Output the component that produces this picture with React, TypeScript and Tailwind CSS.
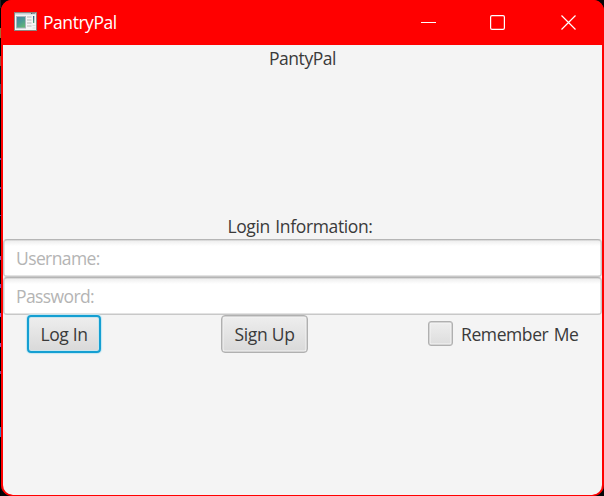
import React from "react";

const font = "font-['Open_Sans','Noto_Sans',sans-serif] font-normal [word-spacing:1.2px]";

function AppIcon() {
  return (
    <svg width="24" height="20" viewBox="0 0 24 20" className="mb-[2px] shrink-0">
      <defs>
        <linearGradient id="pane" x1="0" y1="0" x2="0.6" y2="1">
          <stop offset="0" stopColor="#4a7fa5" />
          <stop offset="0.55" stopColor="#4b9a93" />
          <stop offset="1" stopColor="#62b577" />
        </linearGradient>
        <linearGradient id="bar" x1="0" y1="0" x2="0" y2="1">
          <stop offset="0" stopColor="#34508e" />
          <stop offset="1" stopColor="#55a878" />
        </linearGradient>
      </defs>
      <rect x="0.5" y="0.5" width="22" height="18" fill="#f5f5f5" stroke="#8c8580" />
      <rect x="1" y="1" width="21" height="1.5" fill="#c3ccd2" />
      <path d="M17 1.5h1.5M19.5 1.5h1" stroke="#53606d" />
      <rect x="2.5" y="4.5" width="9" height="11.5" fill="url(#pane)" stroke="#a9b4bd" />
      <path d="M13 5h4.5M13 8h4.5M13 11h4.5M13 14h4.5" stroke="#cbcbcb" strokeWidth="1.5" />
      <rect x="19" y="4" width="1.3" height="7" fill="url(#bar)" />
      <path d="M18.5 13.5h3M18.5 16h3" stroke="#dddddd" />
    </svg>
  );
}

function TitleBar() {
  return (
    <header className="flex h-[45px] shrink-0 items-center bg-[#ff0000] pl-[13px] text-white">
      <AppIcon />
      <span className="mb-[2px] ml-[5px] grow text-[17.5px] leading-6 tracking-[-0.45px]">PantryPal</span>
      <div className="flex pr-[28px]">
        <svg width="15" height="15" viewBox="0 0 15 15"><path d="M0 7.5h15" stroke="#fff" /></svg>
        <svg className="ml-[54px]" width="15" height="15" viewBox="0 0 15 15" fill="none"><rect x=".6" y=".6" width="13.8" height="13.8" rx="1.4" stroke="#fff" strokeWidth="1.2" /></svg>
        <svg className="ml-[56px]" width="15" height="15" viewBox="0 0 15 15"><path d="M.5.5l14 14M14.5.5l-14 14" stroke="#fff" strokeWidth="1.2" /></svg>
      </div>
    </header>
  );
}

function Field({ label, type }: { label: string; type: string }) {
  return (
    <input
      type={type}
      placeholder={label}
      className="block h-[38px] w-full rounded-[4px] border border-[#c8c8c8] border-t-[#b5b5b5] bg-white bg-linear-to-b from-[#ececec] to-white to-[6px] px-3 text-[17.5px] tracking-[-0.6px] shadow-[inset_0_0_0_0.5px_#c8c8c8] outline-none placeholder:text-[#b4b4b4]"
    />
  );
}

export default function App() {
  return (
    <div className={`flex h-[496px] w-[604px] overflow-hidden bg-[#050507] text-[#3a3a3a] ${font}`}>
      <div className="w-px shrink-0 bg-[linear-gradient(#222_0_8px,#000_8px_28px,#a66a32_28px_38px,#000_38px_56px,#994b3b_56px_66px,#151515_66px_84px,#454d5e_84px_94px,#000_94px_158px,#4848a5_158px_160px,#000_160px_187px,#4c45a0_187px_189px,#000_189px_215px,#4343a0_215px_216px,#000_216px_256px,#8354aa_256px_260px,#000_260px_284px,#6656b1_284px_288px,#000_288px_313px,#7c65c5_313px_317px,#000_317px_343px,#875bb0_343px_347px,#000_347px_371px,#734e94_371px_374px,#000_374px_427px,#3680b7_427px_437px,#000_437px)]" />
      <div className="flex h-full w-[603px] flex-col overflow-hidden rounded-[11px] border-b border-[#ff0000] bg-[#ff0000]">
        <TitleBar />
        <main className="mr-[2px] ml-[2px] flex grow flex-col rounded-b-[10px] bg-[#f4f4f4]">
          <h1 className="h-[170px] pt-[1px] text-center text-[17.5px] leading-6 tracking-[-0.45px]">PantyPal</h1>
          <p className="h-6 pr-[5px] text-center text-[17.5px] leading-6 tracking-[-0.36px]"><span className="-mt-px block">Login Information:</span></p>
          <Field label="Username:" type="text" />
          <Field label="Password:" type="password" />
          <div className="flex items-center pl-[24px]">
            <button className="h-[38px] w-[74px] rounded-[4px] border-2 border-[#149fd2] bg-linear-to-b from-[#eeeeee] to-[#d9d9d9] text-[17.5px] tracking-[-0.35px] whitespace-nowrap shadow-[0_0_1px_1px_#c4e7f2,inset_0_0_0_1px_#c9e5ed]">Log In</button>
            <button className="ml-[120px] h-[38px] w-[87px] rounded-[4px] border border-[#b0b0b0] bg-linear-to-b from-[#eeeeee] to-[#d9d9d9] text-[17.5px] tracking-[-0.3px] whitespace-nowrap shadow-[inset_0_0_0_0.5px_#b5b5b5,inset_0_0_0_1.5px_#f3f3f3]">Sign Up</button>
            <label className="ml-[120px] flex items-center gap-2 text-[17.5px] tracking-[-0.4px] whitespace-nowrap">
              <input type="checkbox" className="mb-[2px] h-[25px] w-[25px] appearance-none rounded-[3px] border border-[#b0b0b0] bg-linear-to-b from-[#eeeeee] to-[#dddddd] shadow-[inset_0_0_0_0.5px_#b5b5b5,inset_0_0_0_1.5px_#f5f5f5]" />
              Remember Me
            </label>
          </div>
        </main>
      </div>
    </div>
  );
}
